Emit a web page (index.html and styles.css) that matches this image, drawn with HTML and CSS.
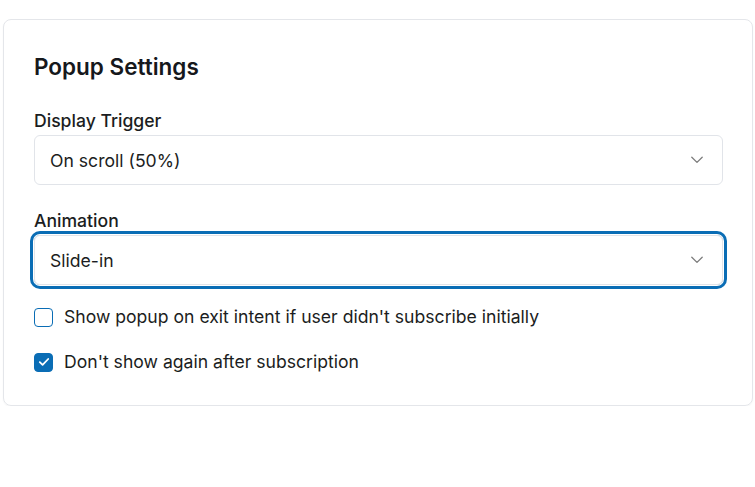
FILE: index.html
```html
<!DOCTYPE html>
<html lang="en">
<head>
<meta charset="utf-8">
<title>Popup Settings</title>
<link rel="stylesheet" href="styles.css">
</head>
<body>
<section class="card">
  <h2 class="title">Popup Settings</h2>
  <div class="field">
    <label class="label">Display Trigger</label>
    <div class="select">
      <span>On scroll (50%)</span>
      <svg class="chev" width="12" height="8" viewBox="0 0 12 8"><path d="M0.8 1.2L6 6.4l5.2-5.2" fill="none" stroke="#7d7d7d" stroke-width="1.3" stroke-linecap="round" stroke-linejoin="round"/></svg>
    </div>
  </div>
  <div class="field">
    <label class="label">Animation</label>
    <div class="select focused">
      <span>Slide-in</span>
      <svg class="chev" width="12" height="8" viewBox="0 0 12 8"><path d="M0.8 1.2L6 6.4l5.2-5.2" fill="none" stroke="#7d7d7d" stroke-width="1.3" stroke-linecap="round" stroke-linejoin="round"/></svg>
    </div>
  </div>
  <div class="checks">
    <label class="check">
      <span class="box"></span>
      <span>Show popup on exit intent if user didn't subscribe initially</span>
    </label>
    <label class="check">
      <span class="box checked"><svg width="14" height="14" viewBox="0 0 14 14"><path d="M2.8 7.2l2.8 2.7L11.2 4" fill="none" stroke="#fff" stroke-width="1.8" stroke-linecap="round" stroke-linejoin="round"/></svg></span>
      <span>Don't show again after subscription</span>
    </label>
  </div>
</section>
</body>
</html>
```
FILE: styles.css
```css
html, body { margin: 0; background: #fff; }
body {
  padding: 19px 2px 0 3px;
  font-family: Inter, "Noto Sans", sans-serif;
  color: #1a1a1a;
}
.card {
  border: 1px solid #e4e6ea;
  border-radius: 8px;
  padding: 33px 29px 31px 30px;
  box-shadow: 0 1px 2px rgba(0,0,0,0.04);
}
.title {
  margin: 0 0 28px;
  font-size: 22.5px;
  line-height: 28px;
  font-weight: 600;
  color: #16181c;
}
.field { margin-bottom: 24px; }
.field + .field { margin-bottom: 20px; }
.label {
  display: block;
  font-size: 17.6px;
  line-height: 23px;
  font-weight: 500;
  margin-bottom: 3px;
  color: #1b1d21;
}
.select {
  height: 50px;
  box-sizing: border-box;
  border: 1px solid #e1e4e9;
  border-radius: 6px;
  display: flex;
  align-items: center;
  justify-content: space-between;
  padding: 0 19px 0 15px;
  font-size: 17.6px;
  color: #1b1d21;
}
.select.focused {
  box-shadow: 0 0 0 1px #fff, 0 0 0 4px #0a6db5;
}
.chev { display: block; }
.checks { display: flex; flex-direction: column; gap: 21px; }
.check {
  display: flex;
  align-items: center;
  gap: 11px;
  font-size: 17.6px;
  line-height: 24px;
  color: #1b1d21;
}
.box {
  width: 19px;
  height: 19px;
  flex: none;
  box-sizing: border-box;
  border: 1.5px solid #0a6db5;
  border-radius: 4px;
  display: flex;
  align-items: center;
  justify-content: center;
}
.box.checked { background: #0a6db5; }
```
